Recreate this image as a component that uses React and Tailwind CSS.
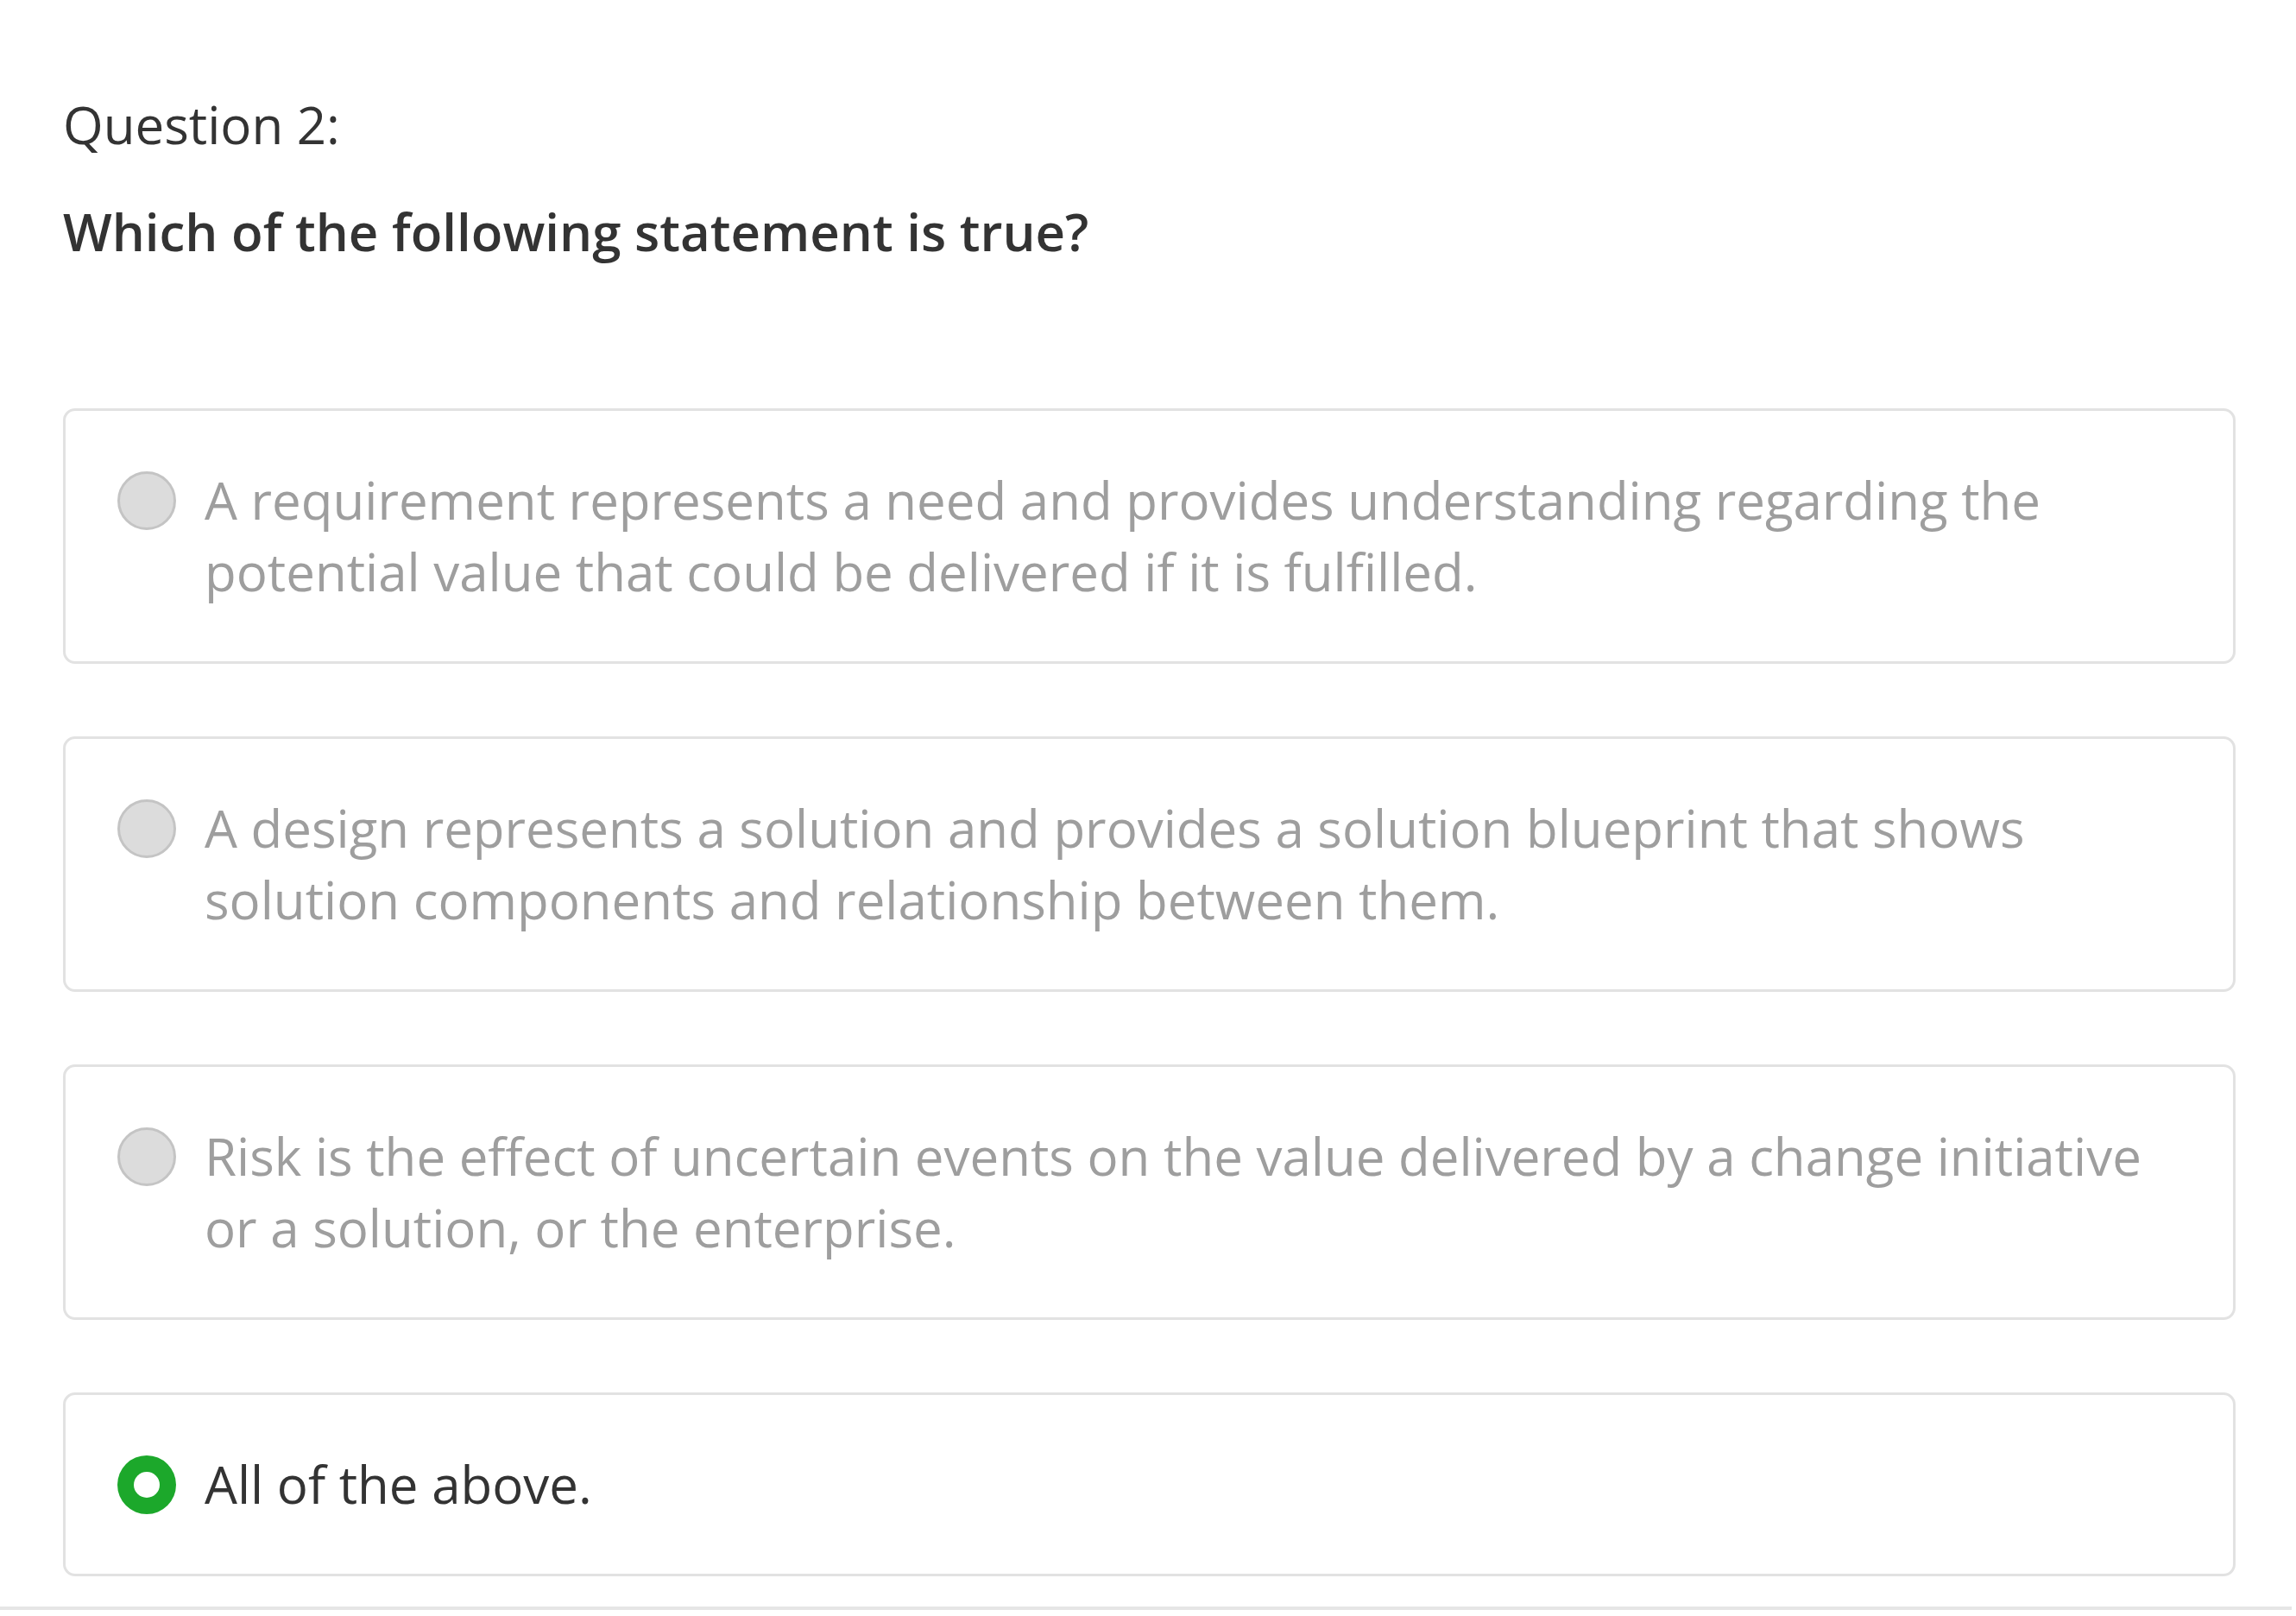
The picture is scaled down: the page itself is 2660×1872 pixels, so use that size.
import React from 'react';

const options = [
  {
    text: 'A requirement represents a need and provides understanding regarding the potential value that could be delivered if it is fulfilled.',
  },
  {
    text: 'A design represents a solution and provides a solution blueprint that shows solution components and relationship between them.',
  },
  {
    text: 'Risk is the effect of uncertain events on the value delivered by a change initiative or a solution, or the enterprise.',
  },
  { text: 'All of the above.', selected: true },
];

const Radio = ({ selected }) => {
  if (selected) {
    return (
      <span className="flex h-[68px] w-[68px] shrink-0 items-center justify-center rounded-full bg-[#1ca82b]">
        <span className="h-[30px] w-[30px] rounded-full bg-white" />
      </span>
    );
  }
  return <span className="h-[68px] w-[68px] shrink-0 rounded-full border-[3px] border-[#c4c4c4] bg-[#dcdcdc]" />;
};

const Option = ({ text, selected }) => (
  <div className="flex items-start gap-[33px] rounded-[14px] border-[3px] border-[#e2e2e2] bg-white py-[62px] pl-[60px] pr-[60px]">
    <div className="flex h-[83px] items-center">
      <Radio selected={selected} />
    </div>
    <p className={`text-[60px] leading-[83px] ${selected ? 'text-[#333333]' : 'text-[#9e9e9e]'}`}>{text}</p>
  </div>
);

export default function App() {
  return (
    <div className="min-h-[1872px] bg-white font-['Open_Sans',sans-serif]">
      <div className="pl-[73px] pr-[70px] pt-[101px]">
        <h2 className="text-[60px] leading-[87px] text-[#333333]">Question 2:</h2>
        <h1 className="mt-[37px] text-[60px] font-semibold leading-[87px] text-[#333333]">
          Which of the following statement is true?
        </h1>
        <div className="mt-[161px] flex flex-col gap-[84px]">
          {options.map((o, i) => (
            <Option key={i} text={o.text} selected={o.selected} />
          ))}
        </div>
      </div>
      <div className="mt-[35px] mr-[5px] h-[4px] bg-[#e6e6e6]" />
    </div>
  );
}
